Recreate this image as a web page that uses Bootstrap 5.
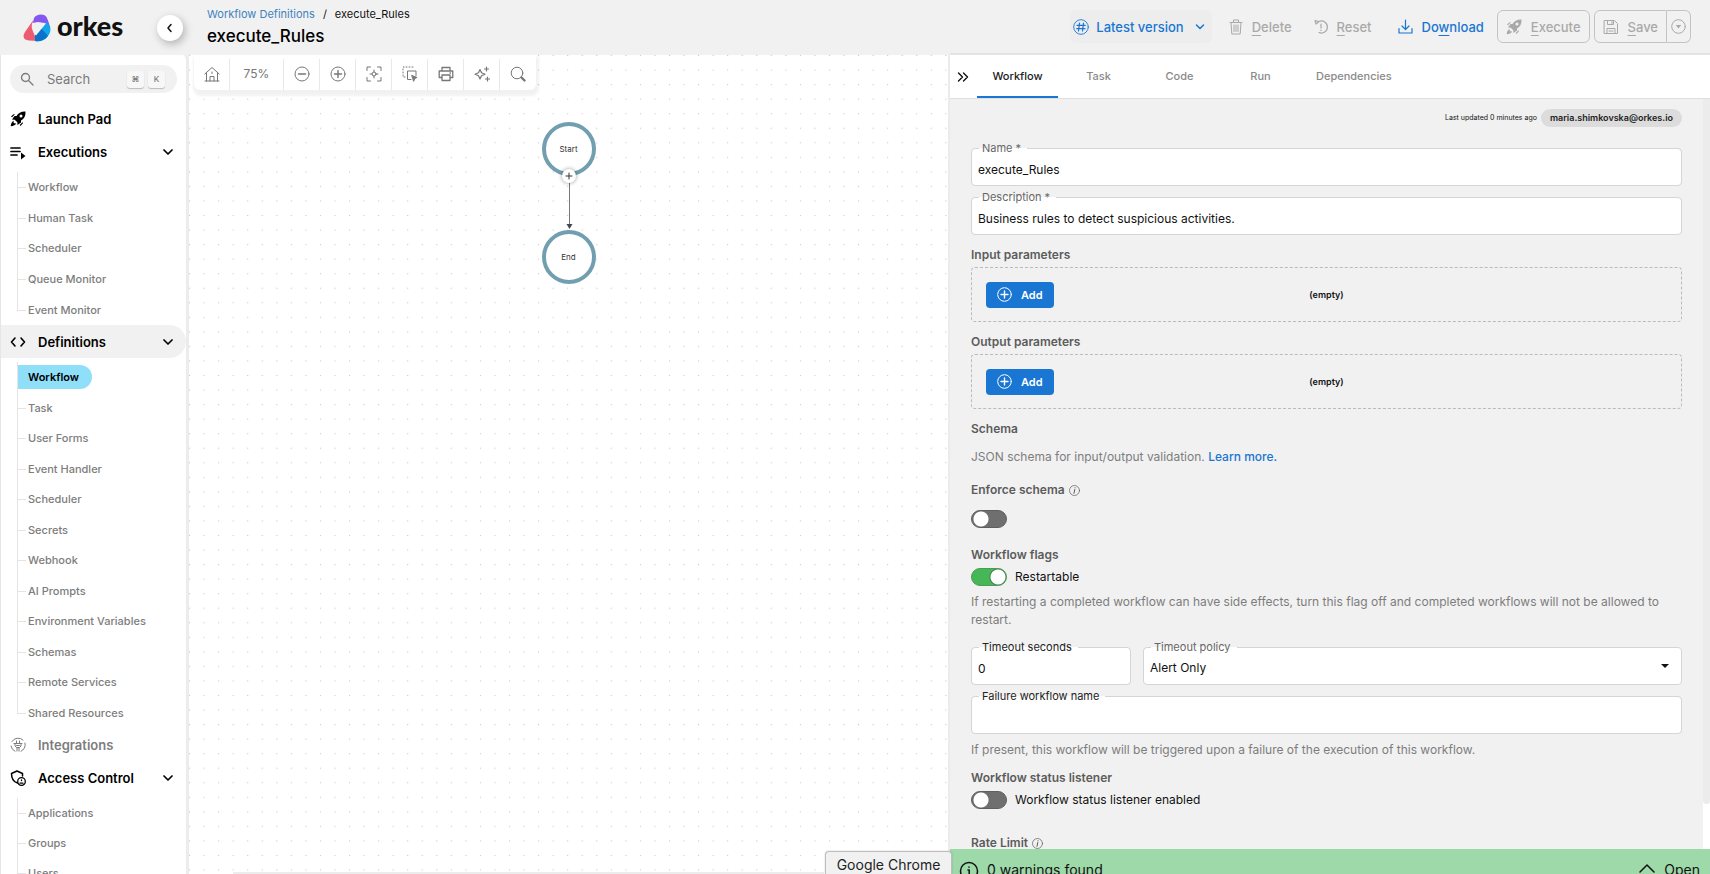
<!DOCTYPE html>
<html lang="en">
<head>
<meta charset="utf-8">
<meta name="viewport" content="width=device-width, initial-scale=1">
<title>execute_Rules - Orkes</title>
<link href="https://cdn.jsdelivr.net/npm/bootstrap@5.3.0/dist/css/bootstrap.min.css" rel="stylesheet">
<style>
:root{--surface:#f1f1f1;--line:#d5d5d5;--blue:#1976d2;--muted:#7d7d7d;--heading:#5c5c5c}
body{font-family:Inter,"Liberation Sans",sans-serif;font-size:12px;line-height:18px;color:#111;background:var(--surface)}
a{text-decoration:none}
svg{display:block;flex:none;fill:none;stroke:currentColor;stroke-linecap:round;stroke-linejoin:round}
svg.solid{stroke:none}
button,input,select{font:inherit;color:inherit}

/* header */
.topbar{height:55px;flex:none;padding-right:19px}
.brand-area{width:189px;height:55px;padding-left:23px;padding-right:6px;flex:none}
.brand-name{font:900 27px/30px Lato,sans-serif;color:#111;margin-left:6px;margin-bottom:4px}
.collapse-btn{width:26px;height:26px;border:0;border-radius:50%;background:#fff;box-shadow:2px 3px 8px #0004}
.crumbs{font-size:11px;line-height:16px;padding-left:18px;padding-top:6px}
.crumbs a{color:#3f83bf}
.crumbs .sep{margin:0 8px}
.page-title{font-size:17px;line-height:22px;font-weight:500;margin:3px 0 0;color:#000}
.actions{padding-bottom:2px}
.tool-btn{height:33px;border:1px solid transparent;border-radius:6px;background:none;font-size:13px;font-weight:500;color:#a9a9a9;padding:0 8px;display:flex;align-items:center;gap:9px}
.tool-btn u{text-underline-offset:3px;text-decoration-thickness:1px}
.tool-btn.primary-tone{color:var(--blue)}
.tool-btn.outlined{border-color:#c4c4c4}
.version-btn{background:#ededed;padding:0 6px 0 2px;gap:7px;border-color:transparent}

/* sidebar */
.sidebar{width:189px;flex:none;background:#fff;border-left:1px solid #e6e6e6;border-right:3px solid #ececec;border-top-right-radius:6px;overflow:hidden;padding-top:10px}
.search-box{height:28px;margin:0 9px 9px;border-radius:14px;background:var(--surface);padding:0 12px 0 10px;color:var(--muted)}
.search-box input{border:0;background:none;outline:0;width:60px;flex:1;min-width:0;padding:0;font-size:13px;margin-left:13px}
.search-box input::placeholder{color:#7a7a7a;opacity:1}
kbd.keycap{width:17px;height:17px;padding:0;background:#f7f7f7;color:#777;font:500 8px/17px Inter,"DejaVu Sans",sans-serif;border-radius:3px;text-align:center;box-shadow:0 1px 1px #bbb}
.nav-head{height:33px;width:100%;border:0;background:none;padding:0 13px 0 9px;font-size:13px;font-weight:600;color:#000;display:flex;align-items:center}
.nav-head .lbl{margin-left:12px;flex:1;text-align:left}
.nav-head.current{background:var(--surface);border-radius:0 17px 17px 0}
.nav-head.dimmed{color:var(--muted)}
.subnav{list-style:none;margin:4px 0 0 16px;padding:0;display:grid;grid-auto-rows:1fr}
.subnav.short{height:153px}
.subnav.long{height:366px}
.subnav li{display:flex;align-items:center;position:relative;min-height:30px}
.subnav li::before{content:"";position:absolute;left:0;top:0;bottom:0;border-left:1px solid #e4e4e4}
.subnav li:last-child:not(.more)::before{bottom:50%}
.subnav li::after{content:"";position:absolute;left:0;top:50%;width:9px;border-top:1px solid #e4e4e4}
.subnav a{font-size:11px;font-weight:500;color:var(--muted);padding:0 13px 0 11px;line-height:24px;position:relative;z-index:1}
.subnav a.active{background:#8fdff8;color:#000;font-weight:600;border-radius:0 12px 12px 0;margin-left:1px;padding-left:10px}

/* canvas */
.flow-canvas{background:#fff;overflow:hidden;min-width:0}
.dots{position:absolute;inset:0;width:100%;height:100%}
.canvas-tools{position:absolute;left:5px;top:0;height:35px;background:#fff;border-radius:0 0 6px 6px;box-shadow:1px 4px 3px 2px #0000000e;color:#777;padding-top:4px}
.canvas-tools button{width:36px;border:0;border-right:1px solid #e8e8e8;background:none;padding:0 0 2px;display:flex;align-items:center;justify-content:center}
.canvas-tools button:last-child{border-right:0}
.canvas-tools .zoom-level{width:54px;font-size:12px}
.flow{padding-top:67px;color:#333}
.flow-node{width:54px;height:54px;border:4px solid #719fb0;border-radius:50%;background:#fff;font-size:8px}
.flow-link{height:54px;width:14px;position:relative}
.flow-add{position:absolute;left:0;top:-7px;width:14px;height:14px;border-radius:50%;border:0;padding:0;background:#fff;box-shadow:0 0 4px #0006}
.dock-edge{position:absolute;left:44px;right:124px;bottom:0;height:2px;background:#ececec}
.dock-tip{position:absolute;right:-4px;bottom:0;width:127px;height:23px;background:#f1f1f1;border:1px solid #bdbdbd;border-bottom:0;border-radius:4px 4px 0 0;font-size:14px;line-height:25px;color:#222;z-index:3;box-shadow:0 0 2px #0003}

/* side panel */
.side-panel{width:45%;max-width:762px;flex:none;background:var(--surface);border-left:2px solid #ebebeb}
.tab-strip{height:44px;flex:none;background:#fff;border-bottom:1px solid #dedede;box-shadow:0 -2px 0 #e3e3e3;z-index:1}
.tab-strip .expander{width:27px;border:0;background:none;padding:0 0 0 7px}
.tab-strip .nav-link{min-width:81px;text-align:center;padding:0 15px;line-height:42px;font-size:11px;font-weight:500;color:#8a8a8a;border-bottom:2px solid transparent;border-radius:0}
.tab-strip .nav-link.active{color:#222;border-color:var(--blue)}
.form-area{padding:10px 21px 0 21px;min-width:0;overflow:hidden}
.scroll-rail{width:7px;flex:none;background:#fff}
.scroll-thumb{height:94%;background:#ececec;border-radius:0 0 4px 4px}
.updated{font-size:7px}
.user-pill{height:18px;border-radius:9px;background:#dcdcdc;font-size:9px;font-weight:600;color:#222;padding:0 9px;margin-left:4px}
.field{position:relative;margin-top:11px}
.field.first{margin-top:21px}
.field label{position:absolute;left:8px;top:-8px;padding:0 6px 0 3px;line-height:16px;font-size:11px;background:linear-gradient(var(--surface) 50%,#fff 50%);color:#666}
.field label.strong-tone{color:#222}
.field .form-control,.field .form-select{height:38px;border:1px solid var(--line);border-radius:4px;padding:4px 6px 0;font-size:12px;background-color:#fff;color:#111}
.field .form-select{background-image:none}
.field .caret{position:absolute;right:13px;top:17px;border:4px solid transparent;border-top-color:#111;border-bottom:0}
.sec{font-size:12px;line-height:18px;font-weight:600;color:var(--heading);margin:11px 0 0}
.dash-box{margin-top:3px;height:55px;border:1px dashed #bbb;border-radius:4px;padding:0 14px}
.dash-box .slot{flex:1 1 0}
.dash-box .vacant{font-size:9px;font-weight:600}
.add-btn{background:var(--blue);color:#fff;border:0;border-radius:4px;height:26px;padding:0 11px;font-size:11px;font-weight:600;gap:9px}
.note{color:var(--muted);font-size:12px;margin:7px 0 0}
.note a{color:var(--blue);font-weight:500}
.toggle{margin-top:4px;min-height:18px;padding:0;gap:8px}
.toggle .form-check-input{width:36px;height:18px;margin:0;float:none;border:1px solid #5f5f5f;border-radius:9px;background:#6f6f6f radial-gradient(circle at 9px 8px,#fff 7px,transparent 8px) no-repeat}
.toggle .form-check-input:checked{border-color:#4d9a5b;background:#45b757 radial-gradient(circle at 26px 8px,#fff 7px,#3f7f4a 8px,transparent 9px) no-repeat}
.warn-bar{height:25px;flex:none;overflow:hidden;background:#9ed9aa;padding:11px 10px 0 9px;font-size:14px;line-height:20px;z-index:2;align-items:flex-start}
.warn-bar button{border:0;background:none;padding:0;gap:9px}
.mt-note{margin-top:10px}
.mt-enforce{margin-top:15px}
.mt-switch{margin-top:11px}
.mt-block{margin-top:18px}
.mt-last{margin-top:25px}
</style>
</head>
<body>
<div class="d-flex flex-column vh-100 overflow-hidden">
  <header class="topbar d-flex">
    <div class="brand-area d-flex align-items-center justify-content-between">
      <a href="#" class="d-flex align-items-center">
        <svg class="solid" width="28" height="28" viewBox="0 0 28 28"><path d="M11 4C13 0 21-1 23.500 3c2 4 3.500 9 3.500 12l-5-5-7-2-5 1z" fill="#8457f0"/><path d="M11 5L2 18c-3 5-1 8 4 8.500l9 .5-4-7-2-10z" fill="#ec5b70"/><path d="M27 12c1 5 0 8-3 11-3 4-8 5-12 4l0-7 11-12z" fill="#12a5ea"/><path d="M18 14l7 8c-3 4-8 6-13 5v-6z" fill="#0873c8"/><path d="M9 10c3-2 10-2 14-.5L13 21.500C10 19 8 14 9 10z" fill="#f1f1f1"/></svg>
        <span class="brand-name">orkes</span>
      </a>
      <button class="collapse-btn d-flex align-items-center justify-content-center" aria-label="Collapse menu"><svg width="10" height="10" viewBox="0 0 10 10" stroke-width="1.5"><path d="M6 1.500L3 5l3 3.500"/></svg></button>
    </div>
    <div class="crumbs flex-grow-1">
      <nav aria-label="Breadcrumb"><a href="#">Workflow Definitions</a><span class="sep">/</span><span>execute_Rules</span></nav>
      <h1 class="page-title">execute_Rules</h1>
    </div>
    <div class="actions d-flex align-items-center">
      <button class="tool-btn version-btn primary-tone me-2"><svg width="16" height="16" viewBox="0 0 16 16"><circle cx="8" cy="8" r="7.300" stroke-width=".9"/><path d="M6.500 4l-1 8M10.500 4l-1 8M4 6.300h8.300M3.700 9.700H12" stroke-width="1.200"/></svg>Latest version<svg width="10" height="10" viewBox="0 0 10 10" stroke-width="1.500" class="ms-1"><path d="M1.500 3L5 6.500 8.500 3"/></svg></button>
      <button class="tool-btn"><svg width="14" height="16" viewBox="0 0 14 16"><path d="M1 3.500h12M2 3.500l.8 11.500h8.400L12 3.500M4.500 3.500V1h5v2.500M5 6v6.500M7 6v6.500M9 6v6.500"/></svg><span><u>D</u>elete</span></button>
      <button class="tool-btn ms-1"><svg width="14" height="16" viewBox="0 0 14 16"><path d="M5 2.500a6 6 0 1 1 0 11M1 1.500l1 3.500 3-2.500-4-1M7 5v4M7 11v.5" stroke-width="1.200"/></svg><span><u>R</u>eset</span></button>
      <button class="tool-btn primary-tone ms-2"><svg width="15" height="16" viewBox="0 0 15 16" stroke-width="1.200"><path d="M7.500 1v9M4 7l3.500 3.500L11 7M1 9.500V14h13V9.500"/></svg><span>Do<u>w</u>nload</span></button>
      <button class="tool-btn outlined ms-1"><svg class="solid" width="16" height="16" viewBox="0 0 16 16"><path fill="currentColor" fill-rule="evenodd" d="M15.500.5C11 .3 8.500 2 6.500 5L4.500 5 2 8.500l2.700.2 2.600 2.600.2 2.700L11 11.500l0-2c3.300-2 4.700-4.500 4.500-9zM11 3.500a1.500 1.500 0 1 1 0 3 1.500 1.500 0 0 1 0-3zM3.800 9.800C2 10.300 1 12.500.7 15.300c2.800-.3 5-1.300 5.500-3.100l-1.400.4-1.400-1.400zM3.500 3.200L1 5.500l1 .8 3-3zM12.800 12.500l-2.300 2.500-.8-1 3-3z"/></svg><span><u>E</u>xecute</span></button>
      <div class="d-flex ms-1">
        <button class="tool-btn outlined rounded-end-0"><svg width="16" height="16" viewBox="0 0 16 16"><path d="M1.500 1.500h10l3 3v10h-13zM4.500 1.500v4h6v-4M4 14.500v-5h8v5M9 2.500v2M6 12h4"/></svg><span><u>S</u>ave</span></button>
        <button class="tool-btn outlined border-start-0 rounded-start-0 px-1" aria-label="Save options"><svg width="15" height="15" viewBox="0 0 15 15"><circle cx="7.500" cy="7.500" r="6.800"/><path d="M4.800 6h5.400l-2.700 3.500z" fill="currentColor" stroke="none"/></svg></button>
      </div>
    </div>
  </header>

  <div class="d-flex flex-grow-1" style="min-height:0">
    <aside class="sidebar">
      <div class="search-box d-flex align-items-center">
        <svg width="14" height="14" viewBox="0 0 14 14" stroke-width="1.400"><circle cx="5.500" cy="5.500" r="4"/><path d="M8.500 8.500L13 13"/></svg>
        <input type="search" placeholder="Search" aria-label="Search">
        <kbd class="keycap me-1">⌘</kbd><kbd class="keycap">K</kbd>
      </div>
      <button class="nav-head"><svg class="solid" width="16" height="16" viewBox="0 0 16 16"><path fill="currentColor" fill-rule="evenodd" d="M15.500.5C11 .3 8.500 2 6.500 5L4.500 5 2 8.500l2.700.2 2.600 2.600.2 2.700L11 11.500l0-2c3.300-2 4.700-4.500 4.500-9zM11 3.500a1.500 1.500 0 1 1 0 3 1.500 1.500 0 0 1 0-3zM3.800 9.800C2 10.300 1 12.500.7 15.300c2.800-.3 5-1.300 5.500-3.100l-1.400.4-1.400-1.400zM3.500 3.200L1 5.500l1 .8 3-3zM12.800 12.500l-2.300 2.500-.8-1 3-3z"/></svg><span class="lbl">Launch Pad</span></button>
      <button class="nav-head"><svg width="16" height="16" viewBox="0 0 16 16" stroke-width="1.700"><path d="M1 4h9M1 7.500h9M1 11h6"/><path d="M11 8.500v7l4.500-3.500z" fill="currentColor" stroke="none"/></svg><span class="lbl">Executions</span><svg width="10" height="10" viewBox="0 0 10 10" stroke-width="1.700"><path d="M1 3l4 4 4-4"/></svg></button>
      <ul class="subnav short">
        <li><a href="#">Workflow</a></li><li><a href="#">Human Task</a></li><li><a href="#">Scheduler</a></li><li><a href="#">Queue Monitor</a></li><li><a href="#">Event Monitor</a></li>
      </ul>
      <button class="nav-head current"><svg width="16" height="16" viewBox="0 0 16 16" stroke-width="1.600"><path d="M5 4L1.500 8 5 12M11 4l3.500 4L11 12"/></svg><span class="lbl">Definitions</span><svg width="10" height="10" viewBox="0 0 10 10" stroke-width="1.700"><path d="M1 3l4 4 4-4"/></svg></button>
      <ul class="subnav long">
        <li><a href="#" class="active">Workflow</a></li><li><a href="#">Task</a></li><li><a href="#">User Forms</a></li><li><a href="#">Event Handler</a></li><li><a href="#">Scheduler</a></li><li><a href="#">Secrets</a></li><li><a href="#">Webhook</a></li><li><a href="#">AI Prompts</a></li><li><a href="#">Environment Variables</a></li><li><a href="#">Schemas</a></li><li><a href="#">Remote Services</a></li><li><a href="#">Shared Resources</a></li>
      </ul>
      <button class="nav-head dimmed"><svg width="16" height="16" viewBox="0 0 16 16"><path d="M2 4.500A7 7 0 0 1 13 3M15 6a7 7 0 0 1-4 8.300M5 14.300A7 7 0 0 1 1 9M4 6.500h8M5 6.500v2.500l1.500 1.500h3L11 9V6.500M6.500 4v2.500M9.500 4v2.500M7 10.500V14M9 10.500V14M6.500 8.500h3"/></svg><span class="lbl">Integrations</span></button>
      <button class="nav-head"><svg width="16" height="16" viewBox="0 0 16 16" stroke-width="1.500"><path d="M7.500 13C4 12 1.500 9 1.500 3.500L7 1l5.500 2.500V6"/><circle cx="11.500" cy="11.500" r="3.800" stroke-width="1.300"/><path d="M10 13.200h3M11.500 10v.6" stroke-width="1.300"/></svg><span class="lbl">Access Control</span><svg width="10" height="10" viewBox="0 0 10 10" stroke-width="1.700"><path d="M1 3l4 4 4-4"/></svg></button>
      <ul class="subnav"><li><a href="#">Applications</a></li><li><a href="#">Groups</a></li><li class="more"><a href="#">Users</a></li></ul>
    </aside>

    <main class="flex-grow-1 position-relative d-flex" style="min-width:0">
      <div class="flow-canvas position-relative flex-grow-1">
        <svg class="dots solid"><defs><pattern id="grid-dots" width="16" height="16" patternUnits="userSpaceOnUse" patternTransform="scale(.909)"><rect width="1.200" height="1.200" fill="#c8c8c8"/></pattern></defs><rect width="100%" height="100%" fill="url(#grid-dots)"/></svg>
        <div class="flow d-flex flex-column align-items-center position-relative">
          <div class="flow-node d-flex align-items-center justify-content-center">Start</div>
          <div class="flow-link">
            <svg width="14" height="54" viewBox="0 0 14 54"><path d="M7.500 0v50" stroke="#777"/><path d="M4.500 48h6l-3 5z" fill="#445" stroke="none"/></svg>
            <button class="flow-add" aria-label="Add task"><svg width="14" height="14" viewBox="0 0 14 14"><path d="M7 4v6M4 7h6"/></svg></button>
          </div>
          <div class="flow-node d-flex align-items-center justify-content-center">End</div>
        </div>
        <div class="canvas-tools d-flex">
          <button aria-label="Home"><svg width="16" height="16" viewBox="0 0 16 16"><path d="M.8 8L8 1.500 15.200 8M2.500 7v8M13.500 7v8M1 15h14M6 15v-4.500h4V15M8 6v1.500"/></svg></button>
          <button class="zoom-level">75%</button>
          <button aria-label="Zoom out"><svg width="16" height="16" viewBox="0 0 16 16"><circle cx="8" cy="8" r="7"/><path d="M4.500 8h7" stroke-width="1.400"/></svg></button>
          <button aria-label="Zoom in"><svg width="16" height="16" viewBox="0 0 16 16"><circle cx="8" cy="8" r="7"/><path d="M4.500 8h7M8 4.500v7" stroke-width="1.400"/></svg></button>
          <button aria-label="Fit view"><svg width="16" height="16" viewBox="0 0 16 16"><path d="M1 4.500V1h3.500M11.500 1H15v3.500M15 11.500V15h-3.500M4.500 15H1v-3.500M8 4v2M8 10v2M4 8h2M10 8h2"/><circle cx="8" cy="8" r="2"/></svg></button>
          <button aria-label="Select area"><svg width="16" height="16" viewBox="0 0 16 16"><path d="M3 11H1V1h10v2" stroke-dasharray="1 2"/><path d="M9 13.500H5.500V5H14v4.500"/><path d="M10 9.500l5 2-2.200 1L11.800 15z" fill="currentColor"/></svg></button>
          <button aria-label="Print"><svg width="16" height="16" viewBox="0 0 16 16" stroke-width="1.300"><path d="M4 5V1.500h8V5M4 11.500H1.200V5h13.600v6.500H12M4 9h8v5.500H4zM12 7h.5"/></svg></button>
          <button aria-label="Auto layout"><svg width="16" height="16" viewBox="0 0 16 16" stroke-width="1.200"><path d="M6 3.500l1.500 3.200L11 8.200 7.500 9.700 6 13 4.500 9.700 1 8.200l3.500-1.500zM12.500 1v4M10.500 3h4M13.500 11v4M11.500 13h4"/></svg></button>
          <button aria-label="Search canvas"><svg width="16" height="16" viewBox="0 0 16 16"><circle cx="7" cy="7" r="5.800"/><path d="M11.500 11.500l3 3" stroke-width="2.400"/></svg></button>
        </div>
        <div class="dock-edge"></div>
      </div>
      <div class="dock-tip text-center" role="tooltip">Google Chrome</div>
    </main>

    <section class="side-panel d-flex flex-column">
      <nav class="tab-strip nav flex-nowrap">
        <button class="expander" aria-label="Close panel"><svg width="12" height="12" viewBox="0 0 12 12" stroke-width="1.400"><path d="M1.500 2l4 4-4 4M6.500 2l4 4-4 4"/></svg></button>
        <a class="nav-link active" href="#">Workflow</a><a class="nav-link" href="#">Task</a><a class="nav-link" href="#">Code</a><a class="nav-link" href="#">Run</a><a class="nav-link" href="#">Dependencies</a>
      </nav>
      <div class="d-flex flex-grow-1" style="min-height:0">
        <form class="form-area flex-grow-1">
          <div class="d-flex justify-content-end align-items-center"><span class="updated">Last updated 0 minutes ago</span><span class="user-pill">maria.shimkovska@orkes.io</span></div>
          <div class="field first"><label for="f-name">Name *</label><input id="f-name" class="form-control" value="execute_Rules"></div>
          <div class="field"><label for="f-desc">Description *</label><input id="f-desc" class="form-control" value="Business rules to detect suspicious activities."></div>
          <h2 class="sec">Input parameters</h2>
          <div class="dash-box d-flex align-items-center">
            <div class="slot"><button type="button" class="add-btn d-flex align-items-center"><svg width="15" height="15" viewBox="0 0 15 15"><circle cx="7.500" cy="7.500" r="6.800"/><path d="M4 7.500h7M7.500 4v7" stroke-width="1.400"/></svg>Add</button></div>
            <span class="vacant">(empty)</span><div class="slot"></div>
          </div>
          <h2 class="sec">Output parameters</h2>
          <div class="dash-box d-flex align-items-center">
            <div class="slot"><button type="button" class="add-btn d-flex align-items-center"><svg width="15" height="15" viewBox="0 0 15 15"><circle cx="7.500" cy="7.500" r="6.800"/><path d="M4 7.500h7M7.500 4v7" stroke-width="1.400"/></svg>Add</button></div>
            <span class="vacant">(empty)</span><div class="slot"></div>
          </div>
          <h2 class="sec">Schema</h2>
          <p class="note mt-note">JSON schema for input/output validation. <a href="#">Learn more.</a></p>
          <label class="sec mt-enforce d-flex align-items-center" for="s-enforce">Enforce schema<svg class="ms-1" width="11" height="11" viewBox="0 0 11 11" stroke-width=".7"><circle cx="5.500" cy="5.500" r="5"/><path d="M5.800 4.500L5 8.300M6 2.700v.2" stroke-width="1"/></svg></label>
          <div class="toggle form-switch d-flex align-items-center mt-switch"><input class="form-check-input" type="checkbox" role="switch" id="s-enforce"></div>
          <h2 class="sec mt-block">Workflow flags</h2>
          <div class="toggle form-switch d-flex align-items-center"><input class="form-check-input" type="checkbox" role="switch" id="s-restart" checked><label for="s-restart">Restartable</label></div>
          <p class="note">If restarting a completed workflow can have side effects, turn this flag off and completed workflows will not be allowed to restart.</p>
          <div class="row g-0 mt-block">
            <div class="col-auto" style="width:22.5%"><div class="field mt-0"><label class="strong-tone" for="f-timeout">Timeout seconds</label><input id="f-timeout" class="form-control" value="0"></div></div>
            <div class="col ps-2 ms-1"><div class="field mt-0"><label for="f-policy">Timeout policy</label><select id="f-policy" class="form-select"><option>Alert Only</option></select><span class="caret"></span></div></div>
          </div>
          <div class="field"><label class="strong-tone" for="f-fail">Failure workflow name</label><input id="f-fail" class="form-control"></div>
          <p class="note">If present, this workflow will be triggered upon a failure of the execution of this workflow.</p>
          <h2 class="sec mt-note">Workflow status listener</h2>
          <div class="toggle form-switch d-flex align-items-center"><input class="form-check-input" type="checkbox" role="switch" id="s-listen"><label for="s-listen">Workflow status listener enabled</label></div>
          <h2 class="sec mt-last d-flex align-items-center">Rate Limit<svg class="ms-1" width="11" height="11" viewBox="0 0 11 11" stroke-width=".7"><circle cx="5.500" cy="5.500" r="5"/><path d="M5.800 4.500L5 8.300M6 2.700v.2" stroke-width="1"/></svg></h2>
        </form>
        <div class="scroll-rail"><div class="scroll-thumb"></div></div>
      </div>
      <footer class="warn-bar d-flex justify-content-between">
        <span class="d-flex"><svg class="me-2" width="20" height="20" viewBox="0 0 20 20" stroke-width="1.500"><circle cx="10" cy="11" r="8.500"/><path d="M9 10h1.200v5M10 7v.2"/></svg>0 warnings found</span>
        <button class="d-flex"><svg width="16" height="16" viewBox="0 0 16 16" stroke-width="1.500"><path d="M1 12l7-7 7 7"/></svg>Open</button>
      </footer>
    </section>
  </div>
</div>
<script src="https://cdn.jsdelivr.net/npm/bootstrap@5.3.0/dist/js/bootstrap.bundle.min.js"></script>
</body>
</html>
